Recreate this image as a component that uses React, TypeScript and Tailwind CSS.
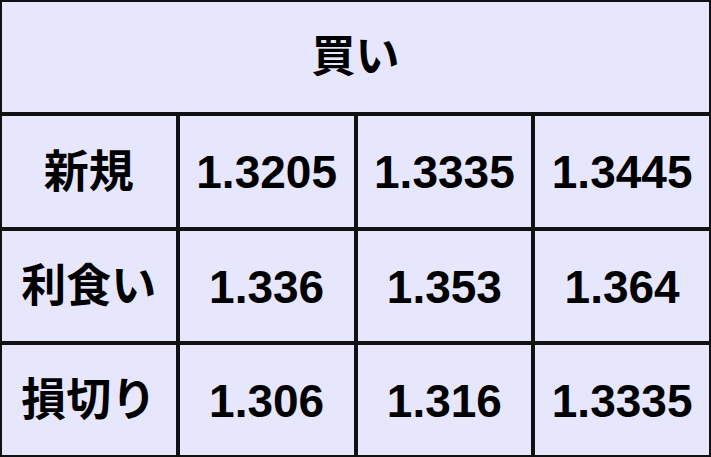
import React from "react";

const rows: { label: string; values: string[] }[] = [
  { label: "新規", values: ["1.3205", "1.3335", "1.3445"] },
  { label: "利食い", values: ["1.336", "1.353", "1.364"] },
  { label: "損切り", values: ["1.306", "1.316", "1.3335"] },
];

export default function App() {
  return (
    <div
      className="w-[711px] h-[457px] bg-[#111111] p-[2px] grid grid-cols-4 grid-rows-4 gap-[4px] text-black font-bold"
      style={{ fontFamily: '"Liberation Sans", Arial, "Noto Sans CJK JP", sans-serif' }}
    >
      <div className="col-span-4 bg-[#e6e6fd] flex items-center justify-center text-[44px] leading-none">
        買い
      </div>
      {rows.map((r) => (
        <React.Fragment key={r.label}>
          <div className="bg-[#e6e6fd] flex items-center justify-center text-[45px] leading-none pt-[2px]">
            {r.label}
          </div>
          {r.values.map((v, i) => (
            <div
              key={i}
              className="bg-[#e6e6fd] flex items-center justify-center text-[46px] leading-none pt-[2px]"
            >
              {v}
            </div>
          ))}
        </React.Fragment>
      ))}
    </div>
  );
}
